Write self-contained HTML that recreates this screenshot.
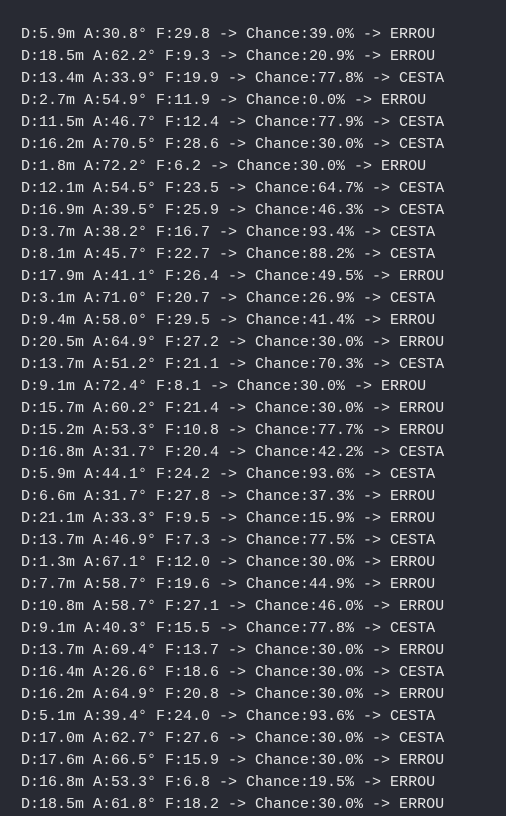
<!DOCTYPE html>
<html><head><meta charset="utf-8"><style>
html,body{margin:0;padding:0;background:#282a33;}
body{width:506px;height:815px;overflow:hidden;}
pre{margin:0;padding:24px 0 0 21px;font-family:"Liberation Mono",monospace;font-size:15px;line-height:22px;color:#e4e4e4;white-space:pre;}
</style></head><body><pre>D:5.9m A:30.8° F:29.8 -> Chance:39.0% -> ERROU
D:18.5m A:62.2° F:9.3 -> Chance:20.9% -> ERROU
D:13.4m A:33.9° F:19.9 -> Chance:77.8% -> CESTA
D:2.7m A:54.9° F:11.9 -> Chance:0.0% -> ERROU
D:11.5m A:46.7° F:12.4 -> Chance:77.9% -> CESTA
D:16.2m A:70.5° F:28.6 -> Chance:30.0% -> CESTA
D:1.8m A:72.2° F:6.2 -> Chance:30.0% -> ERROU
D:12.1m A:54.5° F:23.5 -> Chance:64.7% -> CESTA
D:16.9m A:39.5° F:25.9 -> Chance:46.3% -> CESTA
D:3.7m A:38.2° F:16.7 -> Chance:93.4% -> CESTA
D:8.1m A:45.7° F:22.7 -> Chance:88.2% -> CESTA
D:17.9m A:41.1° F:26.4 -> Chance:49.5% -> ERROU
D:3.1m A:71.0° F:20.7 -> Chance:26.9% -> CESTA
D:9.4m A:58.0° F:29.5 -> Chance:41.4% -> ERROU
D:20.5m A:64.9° F:27.2 -> Chance:30.0% -> ERROU
D:13.7m A:51.2° F:21.1 -> Chance:70.3% -> CESTA
D:9.1m A:72.4° F:8.1 -> Chance:30.0% -> ERROU
D:15.7m A:60.2° F:21.4 -> Chance:30.0% -> ERROU
D:15.2m A:53.3° F:10.8 -> Chance:77.7% -> ERROU
D:16.8m A:31.7° F:20.4 -> Chance:42.2% -> CESTA
D:5.9m A:44.1° F:24.2 -> Chance:93.6% -> CESTA
D:6.6m A:31.7° F:27.8 -> Chance:37.3% -> ERROU
D:21.1m A:33.3° F:9.5 -> Chance:15.9% -> ERROU
D:13.7m A:46.9° F:7.3 -> Chance:77.5% -> CESTA
D:1.3m A:67.1° F:12.0 -> Chance:30.0% -> ERROU
D:7.7m A:58.7° F:19.6 -> Chance:44.9% -> ERROU
D:10.8m A:58.7° F:27.1 -> Chance:46.0% -> ERROU
D:9.1m A:40.3° F:15.5 -> Chance:77.8% -> CESTA
D:13.7m A:69.4° F:13.7 -> Chance:30.0% -> ERROU
D:16.4m A:26.6° F:18.6 -> Chance:30.0% -> CESTA
D:16.2m A:64.9° F:20.8 -> Chance:30.0% -> ERROU
D:5.1m A:39.4° F:24.0 -> Chance:93.6% -> CESTA
D:17.0m A:62.7° F:27.6 -> Chance:30.0% -> CESTA
D:17.6m A:66.5° F:15.9 -> Chance:30.0% -> ERROU
D:16.8m A:53.3° F:6.8 -> Chance:19.5% -> ERROU
D:18.5m A:61.8° F:18.2 -> Chance:30.0% -> ERROU</pre></body></html>
